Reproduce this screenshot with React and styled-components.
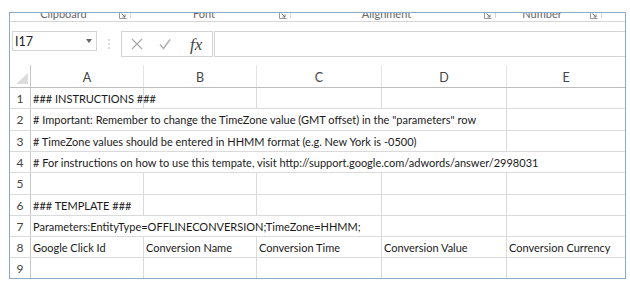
import React from 'react';
import styled, { createGlobalStyle } from 'styled-components';

const GlobalStyle = createGlobalStyle`
  html, body {
    margin: 0;
    padding: 0;
    background: #fff;
  }
  body {
    font-family: Lato, "Liberation Sans", sans-serif;
  }
`;

const COLS = '21px 113px 113px 125px 125px 118px';

const Page = styled.div`
  padding: 12px 0 0 9px;
`;

const Frame = styled.div`
  width: 615px;
  border: 1px solid #8eaac2;
  background: #fff;
`;

const Ribbon = styled.div`
  display: flex;
  height: 8px;
  border-bottom: 1px solid #d6d6d6;
  overflow: hidden;
`;

const Group = styled.div`
  width: ${p => p.$w}px;
  display: flex;
  align-items: flex-start;
  flex-shrink: 0;
`;

const GroupLabel = styled.div`
  flex: 1;
  text-align: center;
  font-size: 11px;
  line-height: 11px;
  margin-top: -5px;
  color: #666;
`;

const Launcher = styled.svg`
  width: 8px;
  height: 8px;
  margin: -2px 3px 0 2px;
  flex-shrink: 0;
`;

const GroupSep = styled.div`
  width: 1px;
  height: 5px;
  background: #d8d8d8;
`;

const FormulaBar = styled.div`
  display: flex;
  align-items: flex-start;
  margin-top: 9px;
  height: 26px;
  padding-left: 2px;
`;

const NameBox = styled.div`
  box-sizing: border-box;
  width: 85px;
  height: 20px;
  border: 1px solid #d4d4d4;
  display: flex;
  align-items: center;
  justify-content: space-between;
  padding: 0 4px 0 2px;
  font-size: 12.5px;
  color: #222;
`;

const DotsSlot = styled.div`
  width: 24px;
  height: 26px;
  display: flex;
  align-items: center;
  justify-content: center;
`;

const FxBox = styled.div`
  box-sizing: border-box;
  width: 92px;
  height: 26px;
  border: 1px solid #d4d4d4;
  display: flex;
  align-items: center;
  padding-left: 9px;
  gap: 16px;
`;

const FxText = styled.span`
  font-family: "Liberation Serif", serif;
  font-style: italic;
  font-size: 17px;
  color: #444;
  margin-left: 3px;
  line-height: 1;
`;

const FormulaInput = styled.div`
  box-sizing: border-box;
  flex: 1;
  height: 26px;
  margin-left: 1px;
  border: 1px solid #d4d4d4;
  border-right: none;
`;

const Sheet = styled.div`
  margin-top: 8px;
`;

const HeaderRow = styled.div`
  display: grid;
  grid-template-columns: ${COLS};
  box-sizing: border-box;
  height: 23px;
  border-bottom: 1px solid #bdbdbd;
`;

const HeaderCell = styled.div`
  display: flex;
  align-items: center;
  justify-content: center;
  padding-top: 2px;
  font-size: 12.5px;
  color: #444;
  border-right: 1px solid #e3e3e3;
  &:last-child {
    border-right: none;
  }
`;

const Corner = styled.div`
  display: flex;
  align-items: flex-end;
  justify-content: flex-end;
  padding: 0 2px 3px 0;
  border-right: 1px solid #c6c6c6;
`;

const Row = styled.div`
  display: grid;
  grid-template-columns: ${COLS};
  align-items: center;
  box-sizing: border-box;
  height: ${p => p.$h}px;
  border-bottom: ${p => (p.$last ? 'none' : '1px solid #dadada')};
`;

const RowHead = styled.div`
  align-self: stretch;
  display: flex;
  align-items: center;
  justify-content: center;
  font-size: 12px;
  color: #444;
  border-right: 1px solid #c6c6c6;
`;

const Cell = styled.div`
  align-self: stretch;
  display: flex;
  align-items: center;
  grid-column: span ${p => p.$span || 1};
  padding-left: 2px;
  font-size: 11px;
  color: #1a1a1a;
  white-space: nowrap;
  border-right: 1px solid #dadada;
  &:last-child {
    border-right: none;
  }
`;

const groups = [
  { label: 'Clipboard', w: 121 },
  { label: 'Font', w: 160 },
  { label: 'Alignment', w: 205 },
  { label: 'Number', w: 106 },
];

// row heights follow the screenshot's scaled grid (about 21.3px per row)
const heights = [21, 22, 21, 21, 22, 21, 21, 21, 20];

const rows = [
  [['### INSTRUCTIONS ###'], [''], [''], [''], ['']],
  [['# Important: Remember to change the TimeZone value (GMT offset) in the "parameters" row', 4], ['']],
  [['# TimeZone values should be entered in HHMM format (e.g. New York is -0500)', 4], ['']],
  [['# For instructions on how to use this tempate, visit http://support.google.com/adwords/answer/2998031', 5]],
  [[''], [''], [''], [''], ['']],
  [['### TEMPLATE ###'], [''], [''], [''], ['']],
  [['Parameters:EntityType=OFFLINECONVERSION;TimeZone=HHMM;', 3], [''], ['']],
  [['Google Click Id'], ['Conversion Name'], ['Conversion Time'], ['Conversion Value'], ['Conversion Currency']],
  [[''], [''], [''], [''], ['']],
];

function LauncherIcon() {
  return (
    <Launcher viewBox="0 0 8 8">
      <path d="M0.5 0.5v7h7" fill="none" stroke="#999" strokeWidth="1" />
      <path d="M2.5 2.5l3.5 3.5M3.5 6h2.5V3.5" fill="none" stroke="#777" strokeWidth="1" />
    </Launcher>
  );
}

export default function App() {
  return (
    <>
      <GlobalStyle />
      <Page>
        <Frame>
          <Ribbon>
            {groups.map(g => (
              <Group key={g.label} $w={g.w}>
                <GroupLabel>{g.label}</GroupLabel>
                <LauncherIcon />
                <GroupSep />
              </Group>
            ))}
          </Ribbon>

          <FormulaBar>
            <NameBox>
              <span>I17</span>
              <svg width="6" height="4" viewBox="0 0 6 4">
                <path d="M0 0h6L3 4z" fill="#666" />
              </svg>
            </NameBox>
            <DotsSlot>
              <svg width="2" height="10" viewBox="0 0 2 10">
                <circle cx="1" cy="1" r="0.8" fill="#aaa" />
                <circle cx="1" cy="5" r="0.8" fill="#aaa" />
                <circle cx="1" cy="9" r="0.8" fill="#aaa" />
              </svg>
            </DotsSlot>
            <FxBox>
              <svg width="12" height="12" viewBox="0 0 12 12">
                <path d="M1 1l10 10M11 1L1 11" stroke="#a8a8a8" strokeWidth="1.1" />
              </svg>
              <svg width="12" height="12" viewBox="0 0 12 12">
                <path d="M1 6.5l3.5 4L11 1.5" fill="none" stroke="#b4b4b4" strokeWidth="1.6" />
              </svg>
              <FxText>fx</FxText>
            </FxBox>
            <FormulaInput />
          </FormulaBar>

          <Sheet>
            <HeaderRow>
              <Corner>
                <svg width="12" height="11" viewBox="0 0 12 11">
                  <path d="M12 0v11H0z" fill="#dcdcdc" />
                </svg>
              </Corner>
              {['A', 'B', 'C', 'D', 'E'].map(l => (
                <HeaderCell key={l}>{l}</HeaderCell>
              ))}
            </HeaderRow>
            {rows.map((cells, i) => (
              <Row key={i} $h={heights[i]} $last={i === rows.length - 1}>
                <RowHead>{i + 1}</RowHead>
                {cells.map(([text, span], j) => (
                  <Cell key={j} $span={span}>{text}</Cell>
                ))}
              </Row>
            ))}
          </Sheet>
        </Frame>
      </Page>
    </>
  );
}
